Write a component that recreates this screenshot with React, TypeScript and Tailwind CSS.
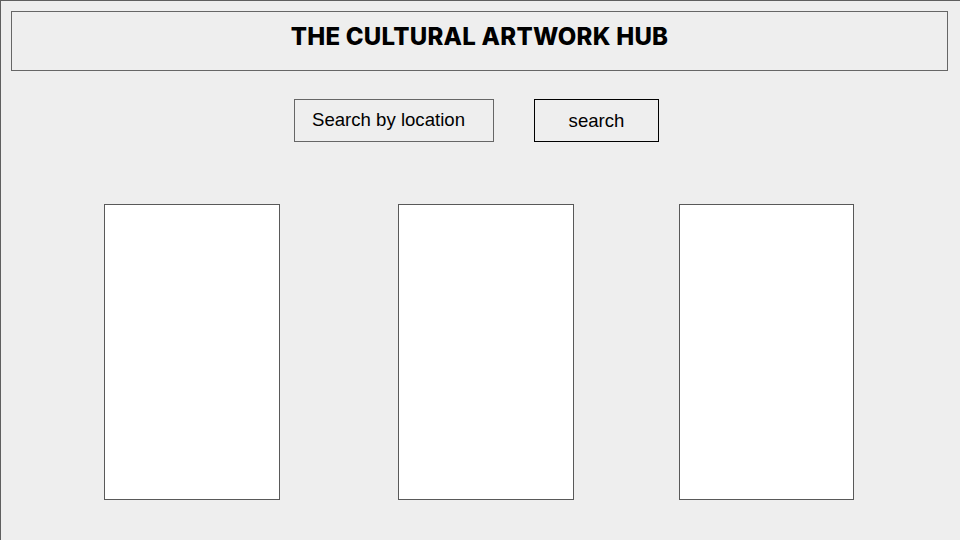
export default function App() {
  return (
    <div className="w-[960px] h-[540px] bg-[#eeeeee] border-l border-t border-[#5f5f5f] overflow-hidden" style={{ fontFamily: '"Liberation Sans", Arial, sans-serif' }}>
      <div className="ml-[10px] mt-[10px] w-[937px] h-[60px] border border-[#666666] flex justify-center">
        <h1 className="mt-[10px] ml-[0px] text-[24px] leading-[30px] font-extrabold text-black tracking-[0.25px]" style={{ fontFamily: 'Inter, "Liberation Sans", sans-serif' }}>
          THE CULTURAL ARTWORK HUB
        </h1>
      </div>
      <div className="flex mt-[28px] ml-[293px]">
        <div className="w-[200px] h-[43px] border border-[#666666] pl-[17px] pt-[8px] text-[18.6px] leading-[24px] text-black">
          Search by location
        </div>
        <div className="ml-[40px] w-[125px] h-[43px] border border-black flex justify-center pt-[9px] text-[18.6px] leading-[24px] text-black">
          search
        </div>
      </div>
      <div className="flex mt-[62px] ml-[103px]">
        <div className="w-[176px] h-[296px] bg-white border border-[#595959]" />
        <div className="ml-[118px] w-[176px] h-[296px] bg-white border border-[#595959]" />
        <div className="ml-[105px] w-[175px] h-[296px] bg-white border border-[#595959]" />
      </div>
    </div>
  );
}
